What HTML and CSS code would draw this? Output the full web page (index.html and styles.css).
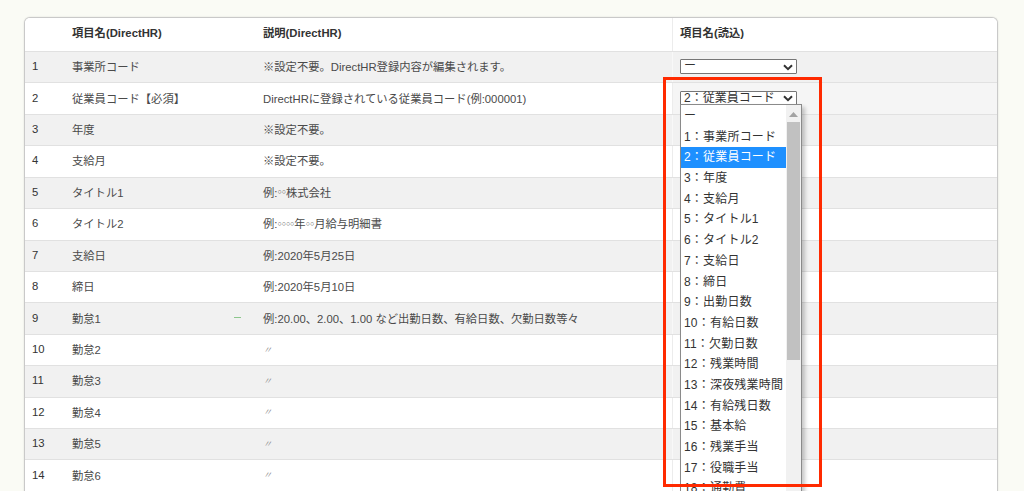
FILE: index.html
```html
<!DOCTYPE html>
<html lang="ja">
<head>
<meta charset="utf-8">
<title>項目対応</title>
<link rel="stylesheet" href="styles.css">
</head>
<body>
<div class="page">
  <div class="table">
    <div class="row head">
      <div class="c1"></div>
      <div class="c2">項目名(DirectHR)</div>
      <div class="c3">説明(DirectHR)</div>
      <div class="c4">項目名(読込)</div>
    </div>
    <div class="row odd">
      <div class="c1">1</div>
      <div class="c2">事業所コード</div>
      <div class="c3">※設定不要。DirectHR登録内容が編集されます。</div>
      <div class="c4"><div class="sel"><span>ー</span><svg class="chev" width="10" height="7" viewBox="0 0 10 7"><polyline points="1,1.2 5,5.2 9,1.2" fill="none" stroke="#333" stroke-width="2"/></svg></div></div>
    </div>
    <div class="row hover">
      <div class="c1">2</div>
      <div class="c2">従業員コード【必須】</div>
      <div class="c3">DirectHRに登録されている従業員コード(例:000001)</div>
      <div class="c4"><div class="sel"><span>2：従業員コード</span><svg class="chev" width="10" height="7" viewBox="0 0 10 7"><polyline points="1,1.2 5,5.2 9,1.2" fill="none" stroke="#333" stroke-width="2"/></svg></div></div>
    </div>
    <div class="row odd">
      <div class="c1">3</div>
      <div class="c2">年度</div>
      <div class="c3">※設定不要。</div>
      <div class="c4"></div>
    </div>
    <div class="row">
      <div class="c1">4</div>
      <div class="c2">支給月</div>
      <div class="c3">※設定不要。</div>
      <div class="c4"></div>
    </div>
    <div class="row odd">
      <div class="c1">5</div>
      <div class="c2">タイトル1</div>
      <div class="c3">例:<span class="mk">○○</span>株式会社</div>
      <div class="c4"></div>
    </div>
    <div class="row">
      <div class="c1">6</div>
      <div class="c2">タイトル2</div>
      <div class="c3">例:<span class="mk">○○○○</span>年<span class="mk">○○</span>月給与明細書</div>
      <div class="c4"></div>
    </div>
    <div class="row odd">
      <div class="c1">7</div>
      <div class="c2">支給日</div>
      <div class="c3">例:2020年5月25日</div>
      <div class="c4"></div>
    </div>
    <div class="row">
      <div class="c1">8</div>
      <div class="c2">締日</div>
      <div class="c3">例:2020年5月10日</div>
      <div class="c4"></div>
    </div>
    <div class="row odd">
      <div class="c1">9</div>
      <div class="c2 split"><span>勤怠1</span><span class="dash"></span></div>
      <div class="c3">例:20.00、2.00、1.00 など出勤日数、有給日数、欠勤日数等々</div>
      <div class="c4"></div>
    </div>
    <div class="row">
      <div class="c1">10</div>
      <div class="c2">勤怠2</div>
      <div class="c3"><span class="ditto">〃</span></div>
      <div class="c4"></div>
    </div>
    <div class="row odd">
      <div class="c1">11</div>
      <div class="c2">勤怠3</div>
      <div class="c3"><span class="ditto">〃</span></div>
      <div class="c4"></div>
    </div>
    <div class="row">
      <div class="c1">12</div>
      <div class="c2">勤怠4</div>
      <div class="c3"><span class="ditto">〃</span></div>
      <div class="c4"></div>
    </div>
    <div class="row odd">
      <div class="c1">13</div>
      <div class="c2">勤怠5</div>
      <div class="c3"><span class="ditto">〃</span></div>
      <div class="c4"></div>
    </div>
    <div class="row">
      <div class="c1">14</div>
      <div class="c2">勤怠6</div>
      <div class="c3"><span class="ditto">〃</span></div>
      <div class="c4"></div>
    </div>
    <div class="row odd"></div>
  </div>

  <div class="dropdown">
    <div class="opts">
      <div class="opt">ー</div>
      <div class="opt">1：事業所コード</div>
      <div class="opt on">2：従業員コード</div>
      <div class="opt">3：年度</div>
      <div class="opt">4：支給月</div>
      <div class="opt">5：タイトル1</div>
      <div class="opt">6：タイトル2</div>
      <div class="opt">7：支給日</div>
      <div class="opt">8：締日</div>
      <div class="opt">9：出勤日数</div>
      <div class="opt">10：有給日数</div>
      <div class="opt">11：欠勤日数</div>
      <div class="opt">12：残業時間</div>
      <div class="opt">13：深夜残業時間</div>
      <div class="opt">14：有給残日数</div>
      <div class="opt">15：基本給</div>
      <div class="opt">16：残業手当</div>
      <div class="opt">17：役職手当</div>
      <div class="opt">18：通勤費</div>
    </div>
    <div class="sbar">
      <svg class="up" width="9" height="5" viewBox="0 0 9 5"><polygon points="0,5 4.5,0 9,5" fill="#a3a3a3"/></svg>
      <div class="thumb"></div>
    </div>
  </div>

  <div class="mark"></div>
</div>
</body>
</html>
```

FILE: styles.css
```css
html, body {
  margin: 0;
  height: 100%;
  overflow: hidden;
  background: #fafbf5;
}
body {
  font-family: "Liberation Sans", Arial, "Noto Sans CJK JP", sans-serif;
  font-size: 11.3px;
  color: #4a4a4a;
}
.page {
  position: relative;
  padding: 17px 26px 0 24px;
}
.table {
  background: #fff;
  border: 1px solid #c9c9c9;
  border-bottom: 0;
  border-radius: 6px 6px 0 0;
  box-shadow: 0 0 2px rgba(0,0,0,0.12);
  overflow: hidden;
}
.row {
  display: grid;
  grid-template-columns: 39px 191px 417px 1fr;
  height: 31.43px;
  box-sizing: border-box;
  border-top: 1px solid #e1e1e1;
  background: #fff;
}
.row.odd { background: #f1f1f1; }
.row.head {
  height: 33px;
  border-top: 0;
  font-weight: bold;
  color: #333;
}
.row > div {
  display: flex;
  align-items: center;
  white-space: nowrap;
  padding-bottom: 2px;
}
.row.head > div { padding-bottom: 5px; }
.c1 { padding-left: 7px; color: #333; }
.c2 { padding-left: 8px; }
.c3 { padding-left: 8px; }
.row > .c4 {
  padding-left: 7px;
  padding-bottom: 1px;
  border-left: 1px solid #ececec;
}
.row.odd .c4 { border-left-color: #f8f8f8; }
.row.hover .c4 { background: #f5f5f5; }
.split {
  justify-content: space-between;
  padding-right: 14px;
}
.dash {
  display: block;
  width: 7px;
  height: 1.5px;
  background: #8cc68c;
}
.mk { font-size: 7px; }
.ditto { font-size: 9px; color: #888; font-style: italic; }

.sel {
  width: 117px;
  height: 15px;
  box-sizing: border-box;
  border: 1px solid #767676;
  border-radius: 1px;
  background: #fff;
  display: flex;
  align-items: center;
  justify-content: space-between;
  padding: 0 3px 0 3px;
  font-size: 12px;
  color: #333;
  line-height: 13px;
}
.chev { display: block; margin-top: 1px; }

.dropdown {
  position: absolute;
  left: 680px;
  top: 104px;
  width: 122px;
  height: 400px;
  box-sizing: border-box;
  border: 1px solid #8a8a8a;
  background: #fff;
  box-shadow: 3px 3px 4px rgba(0,0,0,0.22);
  overflow: hidden;
}
.opts {
  margin-right: 15px;
  padding-top: 1px;
}
.opt {
  height: 20.7px;
  line-height: 20.7px;
  padding-left: 3px;
  font-size: 12px;
  color: #333;
  letter-spacing: 0.2px;
  white-space: nowrap;
}
.opt.on {
  background: #1e90ff;
  color: #fff;
}
.sbar {
  position: absolute;
  top: 0;
  right: 0;
  bottom: 0;
  width: 15px;
  background: #f1f1f1;
}
.up {
  position: absolute;
  left: 3px;
  top: 7px;
}
.thumb {
  position: absolute;
  left: 1px;
  right: 1px;
  top: 17px;
  height: 238px;
  background: #c1c1c1;
}
.mark {
  position: absolute;
  left: 663px;
  top: 77px;
  width: 159px;
  height: 410px;
  box-sizing: border-box;
  border: 3px solid #ff2a00;
}
```
